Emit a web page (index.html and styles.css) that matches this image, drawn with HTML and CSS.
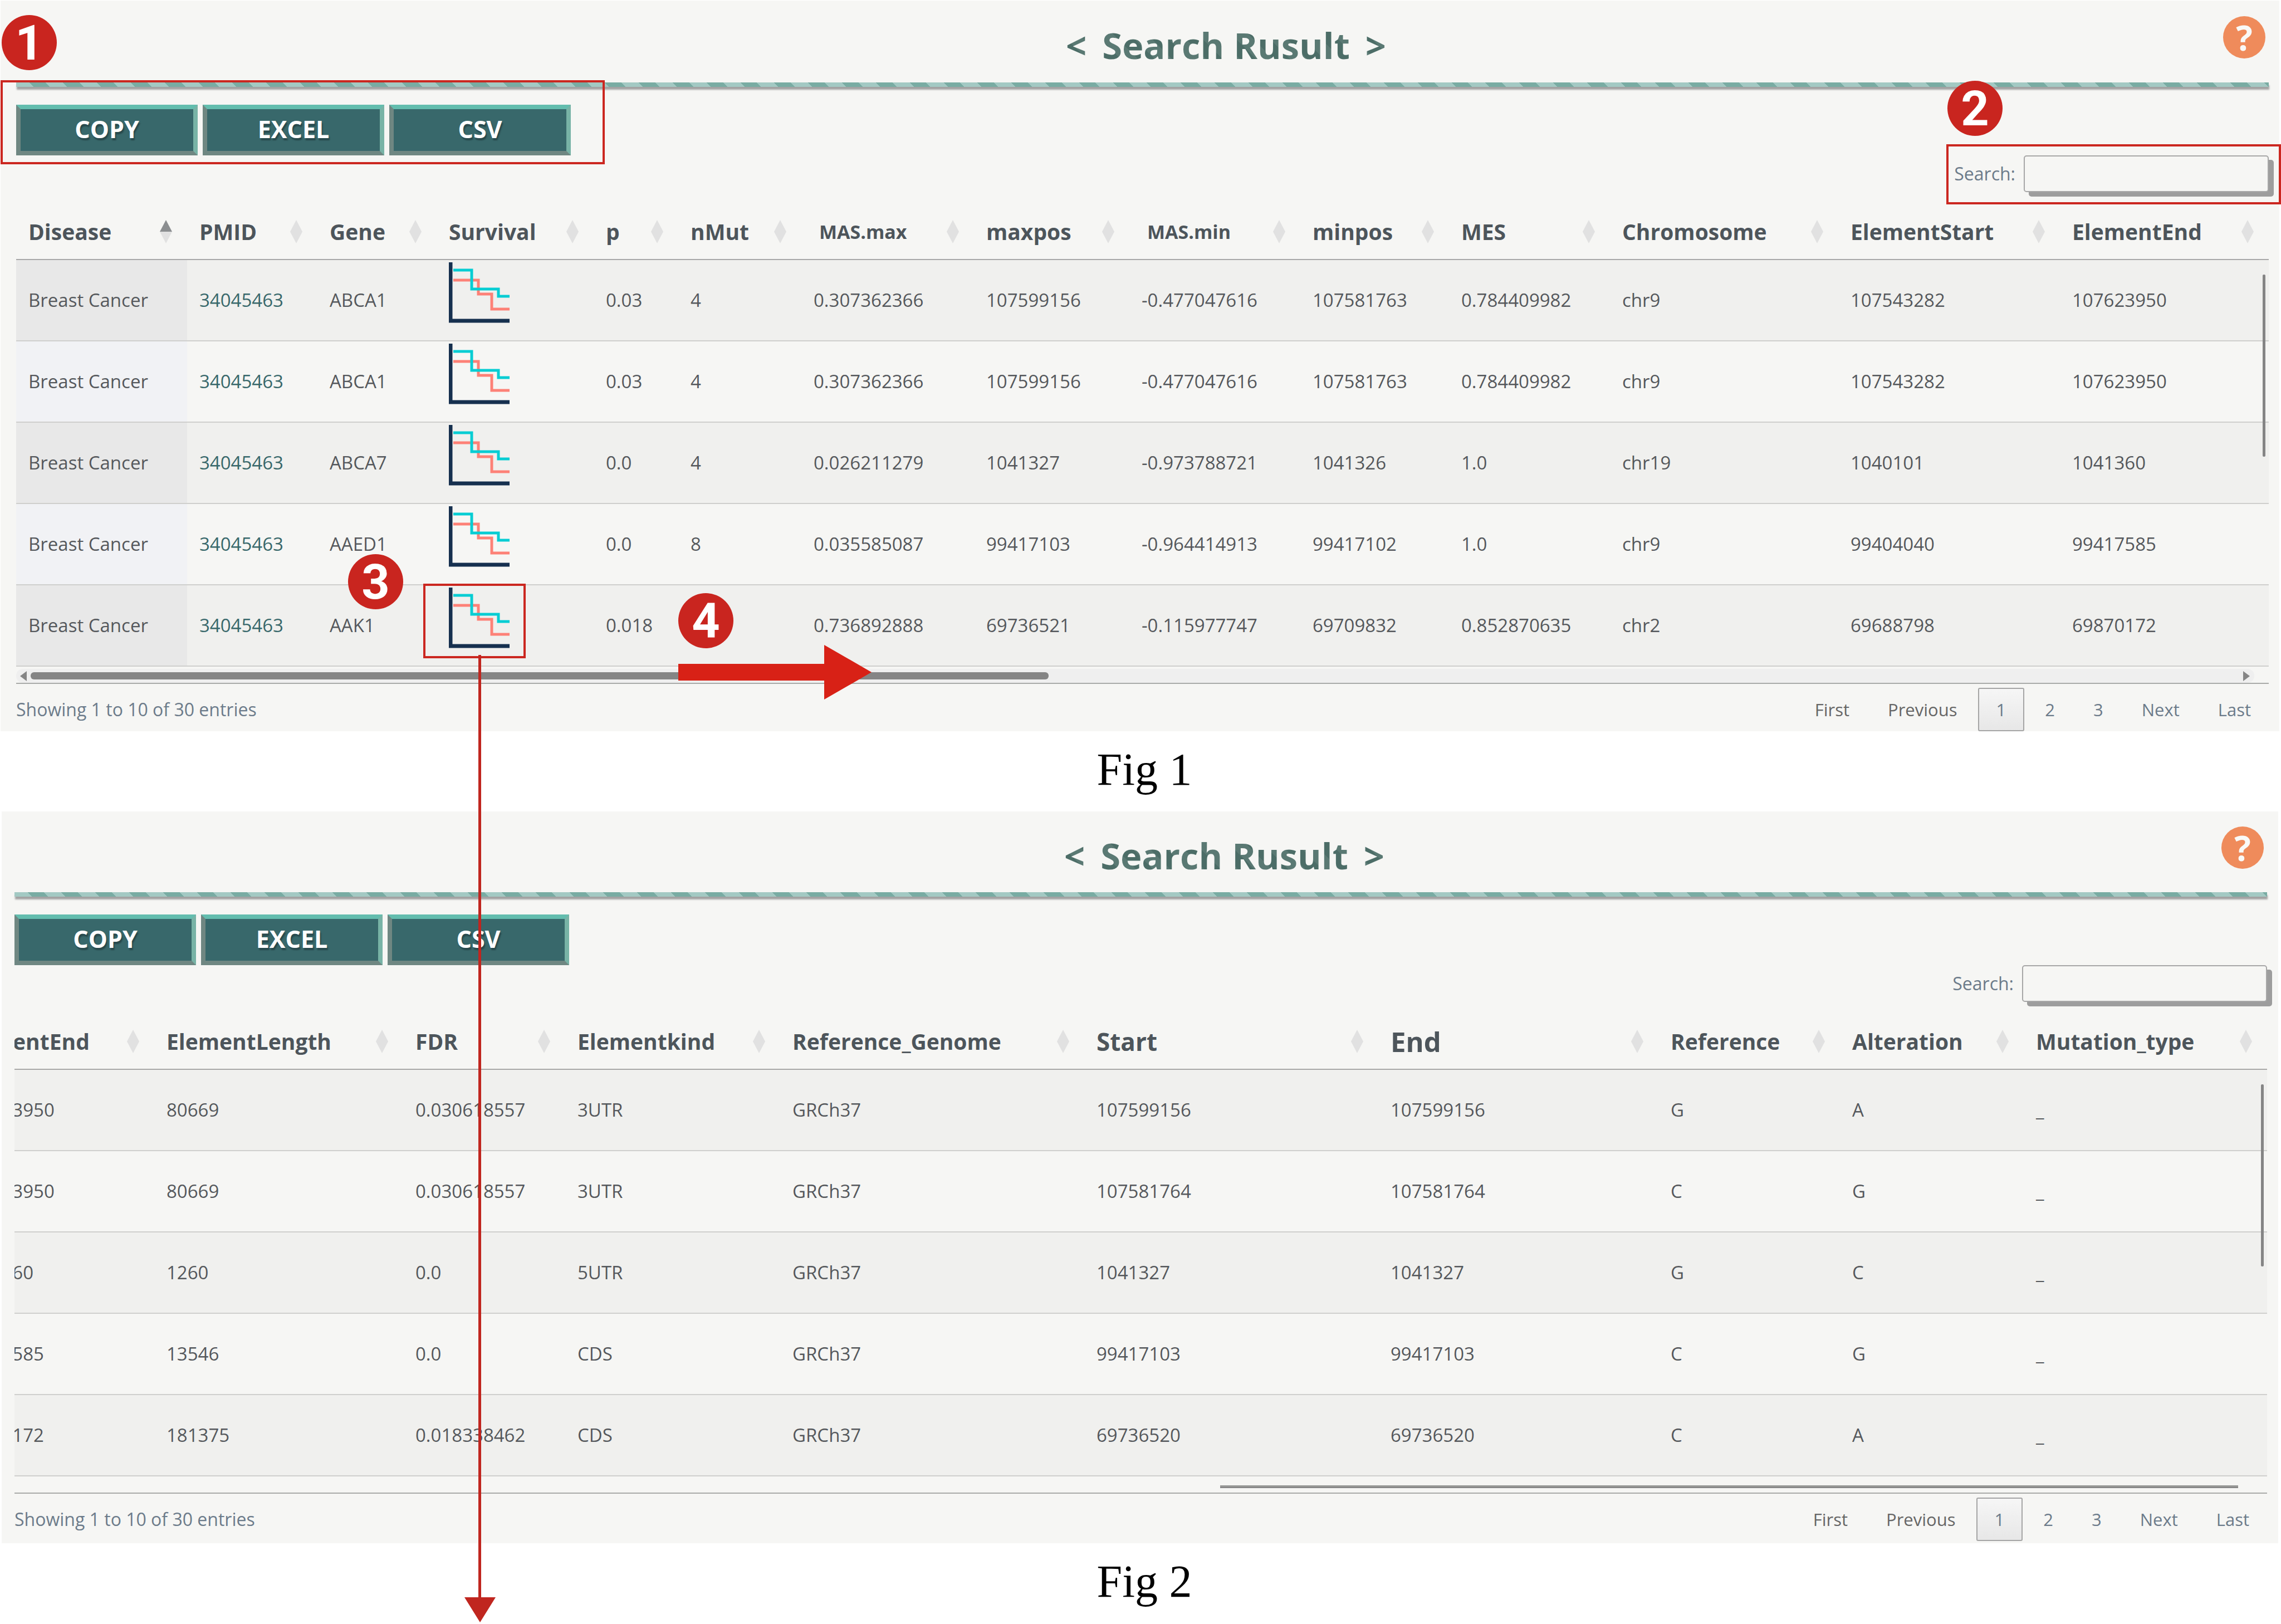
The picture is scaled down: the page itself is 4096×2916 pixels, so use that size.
FILE: index.html
```html
<!DOCTYPE html>
<html lang="en">
<head>
<meta charset="utf-8">
<title>Search Result</title>
<link rel="stylesheet" href="styles.css">
</head>
<body>
<main class="guide" id="guide"></main>
<script src="app.js"></script>
</body>
</html>
```
FILE: styles.css
```css
*,
*::before,
*::after {
  box-sizing: border-box;
}

body {
  margin: 0;
  background: #fff;
  color: #55585c;
  font-family: "Open Sans", "Noto Sans", sans-serif;
  font-size: 33px;
  line-height: 44px;
}

button,
input {
  margin: 0;
  font: inherit;
  color: inherit;
}

.guide {
  position: relative;
  overflow: hidden;
  padding-top: 1px;
}

.figure {
  margin: 0;
}

.panel {
  margin: 0 3px 0 1px;
  padding: 0 19px 0 28px;
  background: #f6f6f4;
}

.panel--scrolled {
  margin: 0 5px 0 3px;
  padding: 0 20px 4px 23px;
}

.caption {
  height: 144px;
  padding: 21px 0 0 14px;
  color: #000;
  font-family: "Liberation Serif", serif;
  font-size: 82px;
  line-height: 96px;
  text-align: center;
}

.figure:last-child .caption {
  height: auto;
}

/* Title bar */

.panel-head {
  display: flex;
  align-items: center;
  height: 147px;
  padding: 0 6px 16px 382px;
}

.panel--scrolled .panel-head {
  height: 145px;
}

.title {
  flex: 1;
  margin: 0;
  padding-top: 28px;
  font-size: 65px;
  line-height: 96px;
  text-align: center;
}

.title-text {
  display: inline-flex;
  gap: 28px;
  background: repeating-linear-gradient(45deg, #5a7973 0 22px, #4c6d67 22px 43px);
  background-clip: text;
  -webkit-background-clip: text;
  color: transparent;
}

.help {
  width: 76px;
  height: 76px;
  padding: 0;
  border: 0;
  border-radius: 50%;
  background: #ef8b5b;
  color: #f9f9f7;
  font-size: 62px;
  font-weight: 700;
  line-height: 76px;
}

.stripe {
  height: 8px;
  background: repeating-linear-gradient(45deg, #a3c9c3 0 22px, #79aca3 22px 43px);
  box-shadow: 1px 5px 3px #a2a2a2;
}

/* Export buttons and filter */

.exports {
  display: flex;
  gap: 9px;
  margin-top: 32px;
}

.export {
  width: 326px;
  height: 91px;
  padding: 0 0 4px;
  border: 8px solid;
  border-color: #63bdae #78b3a6 #6f8782 #6f8782;
  background: #38686b;
  color: #fff;
  font-size: 43px;
  font-weight: 700;
  line-height: 64px;
  text-shadow: 2px 4px 2px #28494c;
}

.filter {
  display: flex;
  align-items: center;
  justify-content: flex-end;
  gap: 15px;
  color: #6c7b8a;
  font-size: 32px;
}

.filter-input {
  width: 440px;
  height: 66px;
  padding: 0 16px;
  border: 2px solid #a7a7a7;
  border-radius: 5px;
  background: #f6f6f4;
  box-shadow: 9px 8px 0 #9d9d9d;
}

/* Table */

.viewport {
  position: relative;
  overflow: hidden;
  margin-top: 22px;
  border-bottom: 2px solid #a8aaa8;
}

.data {
  width: 100%;
  table-layout: fixed;
  border-collapse: separate;
  border-spacing: 0;
}

.panel--scrolled .data {
  width: calc(100% + 120px);
  margin-left: -120px;
}

.data th {
  height: 100px;
  padding: 0 27px 0 22px;
  border-bottom: 2px solid #a8a8a8;
  color: #4d555b;
  font-size: 39px;
  text-align: left;
}

.sort {
  display: flex;
  align-items: center;
  justify-content: space-between;
  width: 100%;
  padding: 0;
  border: 0;
  background: none;
  font-weight: 700;
  line-height: 52px;
}

.sort--small {
  padding-left: 10px;
  font-size: 34px;
}

.sort--large {
  font-size: 44px;
}

.sort--huge {
  font-size: 49px;
}

.sort-icon {
  flex: none;
  width: 22px;
  height: 42px;
}

.data td {
  height: 146px;
  padding: 0 0 0 22px;
  border-bottom: 2px solid #cfcfcd;
  white-space: nowrap;
}

.data tbody tr:nth-child(odd) {
  background: #f0f0ee;
}

.data .sorted {
  background: #f1f2f5;
}

.data tbody tr:nth-child(odd) .sorted {
  background: #e8e8e8;
}

.pmid {
  color: #38686b;
  text-decoration: none;
}

.survival {
  display: block;
  width: 109px;
  height: 109px;
  margin: 0 0 28px;
}

.v-thumb {
  position: absolute;
  top: 126px;
  right: 6px;
  width: 5px;
  height: 327px;
  border-radius: 2px;
  background: #858585;
}

.h-scroll {
  display: flex;
  align-items: center;
  height: 25px;
  margin: 4px 26px 0 0;
  padding: 0 8px 0 7px;
  border-radius: 12px;
  background: #efefef;
}

.h-arrow {
  width: 12px;
  height: 18px;
}

.h-track {
  flex: 1;
  padding: 0 0 0 7px;
}

.h-thumb {
  width: 46%;
  height: 13px;
  border-radius: 6px;
  background: #858585;
}

.h-scroll--thin {
  justify-content: flex-end;
  height: 29px;
  margin: 0;
  padding: 16px 52px 0 0;
  align-items: flex-start;
  background: none;
}

.h-scroll--thin .h-thumb {
  width: 1828px;
  height: 5px;
  border-radius: 0;
  background: linear-gradient(#979896 60%, #858585 60%);
}

/* Footer */

.panel-foot {
  display: flex;
  align-items: center;
  justify-content: space-between;
  height: 85px;
  padding-top: 7px;
  color: #6c7b8a;
  font-size: 32px;
}

.pages {
  display: flex;
  gap: 5px;
  font-size: 31px;
}

.page {
  height: 78px;
  padding: 0 30px;
  border: 2px solid transparent;
  border-radius: 3px;
  background: none;
}

.page--off {
  color: #666;
}

.page--current {
  padding: 0 31px;
  border-color: #a5a5a5;
  background: linear-gradient(#f6f6f6, #e7e7e7);
}

/* Callouts drawn over the panels */

.callout {
  position: absolute;
  border: 4px solid #cb2720;
}

.callout--exports {
  top: 144px;
  left: 1px;
  width: 1085px;
  height: 151px;
}

.callout--filter {
  top: 259px;
  right: 0;
  width: 601px;
  height: 108px;
}

.callout--survival {
  top: 1048px;
  left: 760px;
  width: 184px;
  height: 134px;
}

.badge {
  position: absolute;
  width: 99px;
  height: 99px;
  border-radius: 50%;
  background: #c9251f;
  color: #fff;
  font-family: Roboto, "Open Sans", sans-serif;
  font-size: 88px;
  font-weight: 700;
  line-height: 99px;
  text-align: center;
}

.badge--1 {
  top: 27px;
  left: 3px;
}

.badge--2 {
  top: 145px;
  right: 500px;
}

.badge--3 {
  top: 995px;
  left: 625px;
}

.badge--4 {
  top: 1065px;
  left: 1218px;
}

.arrow-right {
  position: absolute;
  top: 1158px;
  left: 1218px;
  width: 347px;
  height: 98px;
}

.arrow-down {
  position: absolute;
  top: 1176px;
  left: 834px;
  width: 56px;
  height: 1737px;
}
```
FILE: app.js
```js
const pmid = '<a class="pmid" href="#">34045463</a>';

const survival = `<svg class="survival" viewBox="0 0 109 109" role="img" aria-label="Survival curve" fill="none">
  <path d="M8 32H53V57H77V84H109" stroke="#fd8177" stroke-width="5"/>
  <path d="M8 14H41V48H89V61H109" stroke="#06cdd3" stroke-width="5"/>
  <path d="M3 0V105H109" stroke="#16304f" stroke-width="7"/>
</svg>`;

// Columns are [label, share of the width, size modifier].
const figures = [
  {
    caption: 'Fig 1',
    columns: [
      ['Disease', 307], ['PMID', 234], ['Gene', 214], ['Survival', 282], ['p', 152],
      ['nMut', 221], ['MAS.max', 310, 'small'], ['maxpos', 279], ['MAS.min', 307, 'small'],
      ['minpos', 267], ['MES', 289], ['Chromosome', 410], ['ElementStart', 398], ['ElementEnd', 375],
    ],
    rows: [
      ['Breast Cancer', pmid, 'ABCA1', survival, '0.03', '4', '0.307362366', '107599156', '-0.477047616', '107581763', '0.784409982', 'chr9', '107543282', '107623950'],
      ['Breast Cancer', pmid, 'ABCA1', survival, '0.03', '4', '0.307362366', '107599156', '-0.477047616', '107581763', '0.784409982', 'chr9', '107543282', '107623950'],
      ['Breast Cancer', pmid, 'ABCA7', survival, '0.0', '4', '0.026211279', '1041327', '-0.973788721', '1041326', '1.0', 'chr19', '1040101', '1041360'],
      ['Breast Cancer', pmid, 'AAED1', survival, '0.0', '8', '0.035585087', '99417103', '-0.964414913', '99417102', '1.0', 'chr9', '99404040', '99417585'],
      ['Breast Cancer', pmid, 'AAK1', survival, '0.018', '', '0.736892888', '69736521', '-0.115977747', '69709832', '0.852870635', 'chr2', '69688798', '69870172'],
    ],
    sorted: 0,
  },
  {
    caption: 'Fig 2',
    scrolled: true,
    columns: [
      ['ElementEnd', 371], ['ElementLength', 447], ['FDR', 291], ['Elementkind', 386],
      ['Reference_Genome', 546], ['Start', 528, 'large'], ['End', 503, 'huge'],
      ['Reference', 326], ['Alteration', 330], ['Mutation_type', 437],
    ],
    rows: [
      ['107623950', '80669', '0.030618557', '3UTR', 'GRCh37', '107599156', '107599156', 'G', 'A', '_'],
      ['107623950', '80669', '0.030618557', '3UTR', 'GRCh37', '107581764', '107581764', 'C', 'G', '_'],
      ['1041360', '1260', '0.0', '5UTR', 'GRCh37', '1041327', '1041327', 'G', 'C', '_'],
      ['99417585', '13546', '0.0', 'CDS', 'GRCh37', '99417103', '99417103', 'C', 'G', '_'],
      ['69870172', '181375', '0.018338462', 'CDS', 'GRCh37', '69736520', '69736520', 'C', 'A', '_'],
    ],
    sorted: -1,
  },
];

const sortIcon = (active) => `<svg class="sort-icon" viewBox="0 0 22 42" aria-hidden="true">
  <path d="M11 0L22 21H0Z" fill="${active ? '#8b8e90' : '#e1e1e1'}"/><path d="M0 21H22L11 42Z" fill="#e1e1e1"/></svg>`;

const headCell = ([label, , size], active) =>
  `<th scope="col"><button class="sort${size ? ' sort--' + size : ''}" type="button"><span>${label}</span>${sortIcon(active)}</button></th>`;

const wideScroll = `<div class="h-scroll">
  <svg class="h-arrow" viewBox="0 0 12 18" aria-hidden="true"><path d="M12 0V18L0 9Z" fill="#858585"/></svg>
  <div class="h-track"><div class="h-thumb"></div></div>
  <svg class="h-arrow" viewBox="0 0 12 18" aria-hidden="true"><path d="M0 0V18L12 9Z" fill="#858585"/></svg>
</div>`;

const thinScroll = '<div class="h-scroll h-scroll--thin"><div class="h-thumb"></div></div>';

const figureHtml = (f, n) => {
  const total = f.columns.reduce((sum, c) => sum + c[1], 0);
  return `<figure class="figure">
  <section class="panel${f.scrolled ? ' panel--scrolled' : ''}">
    <header class="panel-head">
      <h2 class="title"><span class="title-text"><span>&lt;</span> <span>Search Rusult</span> <span>&gt;</span></span></h2>
      <button class="help" type="button" aria-label="Help">?</button>
    </header>
    <div class="stripe"></div>
    <div class="exports">
      <button class="export" type="button">COPY</button>
      <button class="export" type="button">EXCEL</button>
      <button class="export" type="button">CSV</button>
    </div>
    <div class="filter">
      <label for="filter-${n}">Search:</label>
      <input class="filter-input" id="filter-${n}" type="search">
    </div>
    <div class="viewport">
      <table class="data">
        <colgroup>${f.columns.map((c) => `<col style="width:${c[1] / total * 100}%">`).join('')}</colgroup>
        <thead><tr>${f.columns.map((c, i) => headCell(c, i === f.sorted)).join('')}</tr></thead>
        <tbody>${f.rows.map((r) => `<tr>${r.map((v, i) => `<td${i === f.sorted ? ' class="sorted"' : ''}>${v}</td>`).join('')}</tr>`).join('')}</tbody>
      </table>
      <div class="v-thumb"></div>
      ${f.scrolled ? thinScroll : wideScroll}
    </div>
    <footer class="panel-foot">
      <span>Showing 1 to 10 of 30 entries</span>
      <nav class="pages" aria-label="Pages">
        <button class="page page--off" type="button">First</button>
        <button class="page page--off" type="button">Previous</button>
        <button class="page page--current" type="button">1</button>
        <button class="page" type="button">2</button>
        <button class="page" type="button">3</button>
        <button class="page" type="button">Next</button>
        <button class="page" type="button">Last</button>
      </nav>
    </footer>
  </section>
  <figcaption class="caption">${f.caption}</figcaption>
</figure>`;
};

const callouts = `
<div class="callout callout--exports"></div>
<div class="callout callout--filter"></div>
<div class="callout callout--survival"></div>
<svg class="arrow-down" viewBox="0 0 56 1737" aria-hidden="true"><path d="M25 0H30V1692H56L28 1737L0 1692H25Z" fill="#c0261f"/></svg>
<svg class="arrow-right" viewBox="0 0 347 98" aria-hidden="true"><path d="M0 34H262V0L347 49L262 98V64H0Z" fill="#d82116"/></svg>
<div class="badge badge--1">1</div>
<div class="badge badge--2">2</div>
<div class="badge badge--3">3</div>
<div class="badge badge--4">4</div>`;

document.getElementById('guide').innerHTML = figures.map(figureHtml).join('') + callouts;
```
